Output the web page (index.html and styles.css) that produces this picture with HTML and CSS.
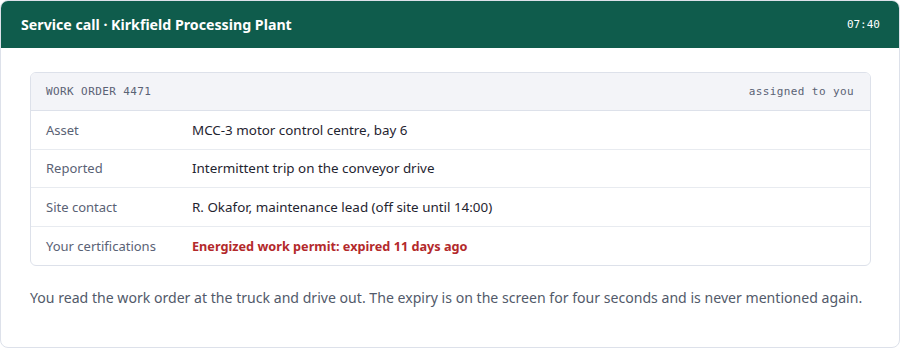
FILE: index.html
```html
<!DOCTYPE html>
<html lang="en">
<head>
    <meta charset="UTF-8">
    <title>Service call</title>
    <link rel="stylesheet" href="styles.css">
</head>
<body>
    <div class="panel">
        <div class="panel-head">
            <h1 class="panel-title">Service call · Kirkfield Processing Plant</h1>
            <span class="clock">07:40</span>
        </div>

        <div class="panel-body">
            <div class="order">
                <div class="order-head">
                    <span>WORK ORDER 4471</span>
                    <span>assigned to you</span>
                </div>
                <div class="row">
                    <span class="label">Asset</span>
                    <span class="value">MCC-3 motor control centre, bay 6</span>
                </div>
                <div class="row">
                    <span class="label">Reported</span>
                    <span class="value">Intermittent trip on the conveyor drive</span>
                </div>
                <div class="row">
                    <span class="label">Site contact</span>
                    <span class="value">R. Okafor, maintenance lead (off site until 14:00)</span>
                </div>
                <div class="row">
                    <span class="label">Your certifications</span>
                    <span class="value warn">Energized work permit: expired 11 days ago</span>
                </div>
            </div>

            <p class="note">You read the work order at the truck and drive out. The expiry is on the screen for four seconds and is never mentioned again.</p>
        </div>
    </div>
</body>
</html>
```

FILE: styles.css
```css
* {
    margin: 0;
    padding: 0;
    box-sizing: border-box;
}

body {
    font-family: 'Noto Sans', 'Open Sans', Arial, sans-serif;
    background-color: #ffffff;
    color: #1f2430;
}

.panel {
    width: 900px;
    height: 348px;
    border: 1px solid #dde1ea;
    border-radius: 8px;
    overflow: hidden;
    background: #fff;
}

.panel-head {
    height: 47px;
    background-color: #0f5c4c;
    color: #fff;
    display: flex;
    align-items: center;
    justify-content: space-between;
    padding: 0 19px 0 20px;
}

.panel-title {
    font-size: 14.2px;
    font-weight: bold;
}

.clock {
    font-family: 'DejaVu Sans Mono', monospace;
    font-size: 11px;
}

.panel-body {
    padding: 24px 28px 0 29px;
}

.order {
    border: 1px solid #dde1ea;
    border-radius: 6px;
    overflow: hidden;
}

.order-head {
    display: flex;
    justify-content: space-between;
    align-items: center;
    height: 38px;
    padding: 0 16px 0 15px;
    background-color: #f3f4f8;
    border-bottom: 1px solid #dde1ea;
    font-family: 'DejaVu Sans Mono', monospace;
    font-size: 11px;
    letter-spacing: 0.4px;
    color: #5a6275;
}

.row {
    display: flex;
    align-items: center;
    height: 38.6px;
    padding: 0 15px;
    border-bottom: 1px solid #e8ebf0;
    font-size: 13px;
}

.row:last-child {
    border-bottom: none;
}

.label {
    width: 146px;
    color: #5a6275;
}

.value {
    font-size: 13.4px;
    color: #1f2430;
}

.value.warn {
    font-size: 12.7px;
    color: #b3292b;
    font-weight: bold;
}

.note {
    margin-top: 22px;
    font-size: 14.1px;
    color: #525a6a;
}
```
